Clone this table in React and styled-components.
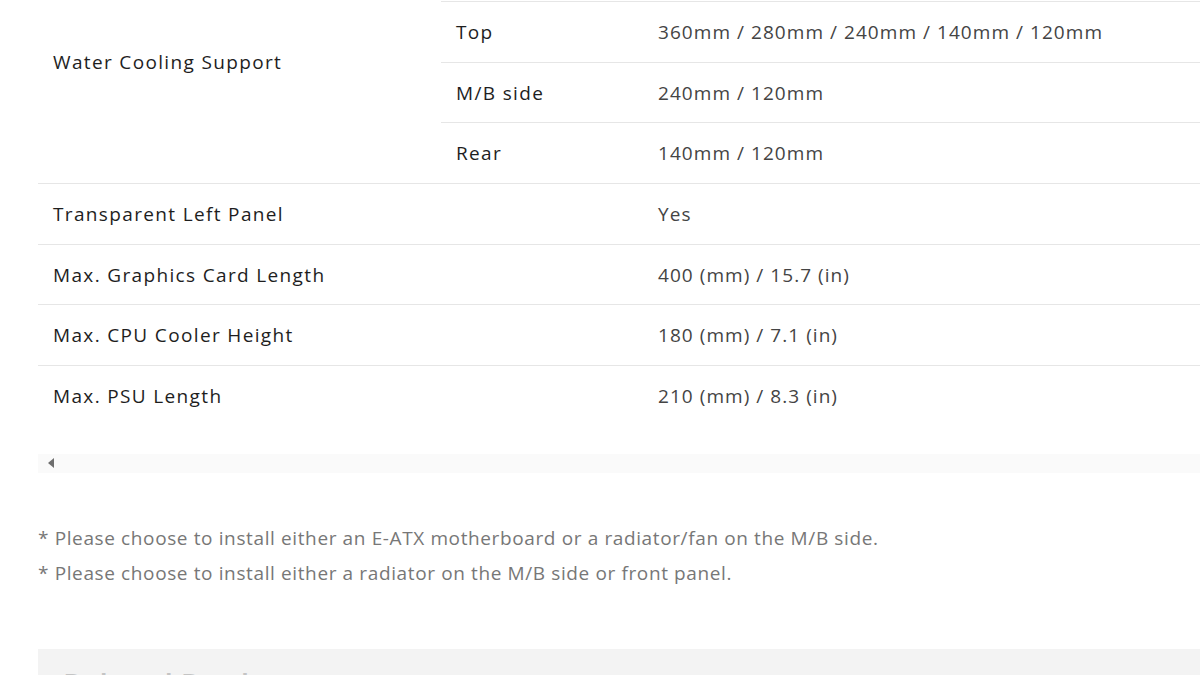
import React from 'react';
import styled, { createGlobalStyle } from 'styled-components';

const specs = [
  { label: 'Water Cooling Support', sub: 'Front', value: '360mm / 280mm / 240mm / 140mm / 120mm', span: 4 },
  { sub: 'Top', value: '360mm / 280mm / 240mm / 140mm / 120mm' },
  { sub: 'M/B side', value: '240mm / 120mm' },
  { sub: 'Rear', value: '140mm / 120mm' },
  { label: 'Transparent Left Panel', value: 'Yes' },
  { label: 'Max. Graphics Card Length', value: '400 (mm) / 15.7 (in)' },
  { label: 'Max. CPU Cooler Height', value: '180 (mm) / 7.1 (in)' },
  { label: 'Max. PSU Length', value: '210 (mm) / 8.3 (in)' },
];

const notes = [
  '* Please choose to install either an E-ATX motherboard or a radiator/fan on the M/B side.',
  '* Please choose to install either a radiator on the M/B side or front panel.',
];

function App() {
  return (
    <>
      <GlobalStyle />
      <Page>
        <TableScroller>
          <SpecTable>
            <tbody>
              {specs.map((row, i) => (
                <tr key={i}>
                  {row.label && (
                    <Label rowSpan={row.span || 1} colSpan={row.sub ? 1 : 2} $last={i === specs.length - 1}>
                      {row.label}
                    </Label>
                  )}
                  {row.sub && <Label $sub>{row.sub}</Label>}
                  <Value $last={i === specs.length - 1}>{row.value}</Value>
                </tr>
              ))}
            </tbody>
          </SpecTable>
          <ScrollTrack>
            <ScrollArrow />
          </ScrollTrack>
        </TableScroller>

        <Notes>
          {notes.map((n) => (
            <Note key={n}>{n}</Note>
          ))}
        </Notes>

        <NextSection>
          <SectionTitle>Related Products</SectionTitle>
        </NextSection>
      </Page>
    </>
  );
}

const GlobalStyle = createGlobalStyle`
  html, body {
    margin: 0;
    background: #fff;
    overflow: hidden;
  }
  body {
    font-family: "Open Sans", "Noto Sans", sans-serif;
  }
`;

const Page = styled.div`
  margin-top: -58.5px;
  padding-left: 38px;
  width: 1300px;
`;

const TableScroller = styled.div`
  width: 100%;
`;

const SpecTable = styled.table`
  width: 100%;
  border-collapse: separate;
  border-spacing: 0;
  table-layout: fixed;
`;

const Label = styled.td`
  box-sizing: border-box;
  height: 60.67px;
  padding: 0 15px;
  width: ${({ $sub }) => ($sub ? '202px' : '403px')};
  font-size: 19px;
  font-weight: 500;
  letter-spacing: 1.35px;
  color: #1e1e1e;
  vertical-align: middle;
  border-bottom: ${({ $last }) => ($last ? 'none' : '1px solid #e6e6e6')};
`;

const Value = styled.td`
  box-sizing: border-box;
  height: 60.67px;
  padding: 0 15px;
  font-size: 19px;
  letter-spacing: 1.05px;
  color: #444;
  vertical-align: middle;
  border-bottom: ${({ $last }) => ($last ? 'none' : '1px solid #e6e6e6')};
`;

const ScrollTrack = styled.div`
  margin-top: 27px;
  height: 19px;
  background: #fafafa;
  display: flex;
  align-items: center;
  padding-left: 10px;
`;

const ScrollArrow = styled.span`
  width: 0;
  height: 0;
  border-top: 5px solid transparent;
  border-bottom: 5px solid transparent;
  border-right: 6px solid #6e6e6e;
`;

const Notes = styled.div`
  margin-top: 54.5px;
  display: flex;
  flex-direction: column;
  gap: 12px;
`;

const Note = styled.p`
  margin: 0;
  font-size: 19px;
  line-height: 23px;
  letter-spacing: 0.62px;
  color: #777;
`;

const NextSection = styled.section`
  margin-top: 64px;
  background: #f3f3f3;
  padding: 15px 25px;
  height: 200px;
`;

const SectionTitle = styled.h2`
  margin: 0;
  font-size: 30px;
  font-weight: 600;
  color: #c4c4c4;
`;

export default App;
